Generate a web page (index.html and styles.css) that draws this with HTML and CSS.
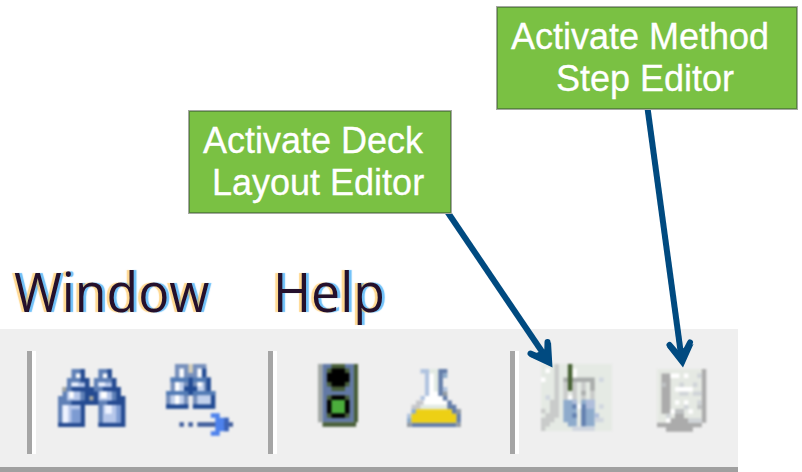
FILE: index.html
```html
<!DOCTYPE html>
<html lang="en">
<head>
<meta charset="utf-8">
<title>Editor toolbar</title>
<link rel="stylesheet" href="styles.css">
</head>
<body>
<main class="stage">
  <nav class="menubar">
    <span class="menu window">Window</span>
    <span class="menu help">Help</span>
  </nav>
  <div class="toolbar">
    <i class="sep first"></i>
    <svg class="icon find" viewBox="0 0 15 13">
      <path fill="#5f80b6" d="M3 0H6V2H7V4H8V2H9V0H12V2H13V4H14V6H15V13H9V8H6V13H0V6H1V4H2V2H3Z"/>
      <path fill="#244a91" d="M5 0h1v2h1v2h1v1h1v3H6v5H5V7h1V5H5V2H5zM11 0h1v2h1v2h1v2h1v7h-1V7h-1V5h-1V2h-1zM0 12h6v1H0zM9 12h6v1H9zM3 4h3v1H3zM10 4h3v1h-3zM3 7h3v1H3zM11 7h3v1h-3z"/>
      <path fill="#b6c7ea" d="M3 3h3v1H3zM9 3h3v1H9zM2 5h3v2H2zM9 5h3v2H9zM1 8h4v4H1zM10 8h4v4h-4z"/>
      <path fill="#fff" d="M4 1h1v1H4zM10 1h1v1h-1zM2.500 5h1v1.500h-1zM9.500 5h1.400v1.500H9.500z"/>
      <path fill="#eef3ff" d="M1 8h1.300v4H1zM3 3h1.500v.8H3zM9 3h1.500v.8H9zM10.500 8h1.500v2h-1.500z"/>
      <path fill="#7d9bd2" d="M3 9h2v3H3zM13 8h1v4h-1z"/>
      <path fill="#a8a8a0" d="M1 4h.8v1H1zM7 6h.9v1H7z"/>
    </svg>
    <svg class="icon next" viewBox="0 0 15 16">
      <path fill="#7790bc" d="M2 0h7v3h1v3h1v4H6V7H5v3H0V6h1V3h1z"/>
      <path fill="#214a93" d="M0 9h5v1H0zM6 9h5v1H6zM10 6h1v4h-1zM9 3h1v3H9zM8 1h1v2H8zM5 3h1v4H5zM4 5h3v2H4z"/>
      <path fill="#527bb5" d="M0 6h5v1H0zM6 6h5v1H6zM1 3h4v1H1zM6 3h3v1H6z"/>
      <path fill="#c2d1ec" d="M2 4h2v2H2zM7 4h1.500v2H7zM1 7h3v2H1zM7 7h3v2H7z"/>
      <path fill="#fff" d="M3 1h1v2H3zM7 1h1v2H7zM2 4h1v2H2zM2 7h1v2H2zM7 4h1v1H7z"/>
      <path fill="#d5cfbb" d="M5 0h1v2H5z"/>
      <path fill="#3f5d9c" d="M3 13h1v1H3zM5 13h1v1H5zM7 13h8v1H7z"/>
      <path fill="#4e82ec" d="M10 11h2v1h2v1h-3v-1h-1zM11 13h2v1h1v1h-2v1h-2v-1h1z"/>
      <path fill="#3c62b4" d="M13 12h1v3h-1z"/>
    </svg>
    <i class="sep second"></i>
    <svg class="icon traffic" viewBox="0 0 9 14">
      <path fill="#a2a8a5" d="M0 0h1v13H0z"/>
      <path fill="#6279a5" d="M1 0h7v13H1z"/>
      <path fill="#475d37" d="M8 0h1v13H8zM1 13h7.500v1H1zM3 0h3v6H3zM2 1h5v4H2zM2 7h5v5H2z"/>
      <path fill="#000" d="M3 1h3v1h1v2H6v1H3V4H2V2h1zM3 7h3v1h1v3H6v1H3v-1H2V8h1z"/>
      <path fill="#4bae3c" d="M3 8h3v3H3z"/>
    </svg>
    <svg class="icon flask" viewBox="0 0 12 13">
      <path fill="#b0c3df" d="M3 0h2v6h-1v1H3V6h1V1H3zM1 9h1v1H1zM0 10h1v2H0zM8 4h1v1H8z"/>
      <path fill="#fff" d="M5 1h2v5h1v1h1v1H3V7h1V6h1z"/>
      <path fill="#e2eae3" d="M5 0h2v1H5zM6 1h1v4H6zM3 8h6v1H3z"/>
      <path fill="#637da9" d="M7 0h2v1H8v5H7zM8 6h1v1H8zM9 7h1v1H9zM9 8h2v1h1v3h-1v-2h-1V9H9zM1 12h10v1H1z"/>
      <path fill="#c5c6ca" d="M2 7h1.700v1H2zM1 8h2v1H1z"/>
      <path fill="#8eaccb" d="M1 9h1v1H1zM0 11h1v1H0zM8 1h1v1H8z"/>
      <path fill="#9199a1" d="M8 5h1v1H8zM0 12h1v1H0zM11 12h1v1h-1zM11 9h1v1h-1z"/>
      <path fill="#edd015" d="M2 9h8v1h1v2H1v-2h1z"/>
    </svg>
    <i class="sep third"></i>
    <svg class="icon deck" viewBox="0 0 16 15">
      <path fill="#e5eae4" d="M0 0h16v15H0z"/>
      <path fill="#c9cbca" d="M3 0h1v12H3v1H2v1H1v1H0v-3h1v-1h1V8h1zM0 10h1v1H0zM5 4h1v4H5zM7 4h1v4H7zM9 4h1v5H9zM11 4h1v4h-1z"/>
      <path fill="#aaadac" d="M5 3h7v1H5zM9 6h1v1H9zM11 3h1v3h-1z"/>
      <path fill="#8eabcc" d="M5 8h3v6H6v-1H5zM9 8h3v6H9z"/>
      <path fill="#b0bedb" d="M10 8h2v2h-2zM7 8h1v1H7zM12 11h1v1h-1z"/>
      <path fill="#6380af" d="M9 9h1v5H9zM7 9h1v1H7zM7 11h1v1H7z"/>
      <path fill="#d0d6df" d="M13 3h1v1h-1zM13 9h1v1h-1zM1 7h1v1H1zM12 12h2v1h-2zM7 14h5v1H7z"/>
      <path fill="#fff" d="M1 1h1v1H1zM0 3h1v1H0zM7 1h1v2H7zM8 9h1v1H8zM6 7h1v1H6z"/>
      <path fill="#456031" d="M6 0h1v6H6z"/>
    </svg>
    <svg class="icon method" viewBox="0 0 11 14">
      <path fill="#e5e9e3" d="M0 0h10v12H0z"/>
      <path fill="#ababab" d="M10 0h1v12h-1v1H8v1H2v-1H0v-1h3v-1h1V9h2v2h1v1h3zM1 1h2v9H1z"/>
      <path fill="#d0d4d8" d="M9 1h1v1H9zM5 3h1v1H5zM8 3h1v1H8zM5 5h2v1H5zM8 5h2v1H8zM9 7h1v1H9zM6 8h1v1H6zM7 11h3v1H7zM2 10h1v1H2z"/>
      <path fill="#bfc2c3" d="M1 3h1v1H1zM9 8h1v1H9zM4 9h2v1H4z"/>
      <path fill="#fff" d="M3 1h2v1H3zM6 1h1v1H6zM4 4h4v1H4zM4 7h1v1H4zM6 7h1v1H6zM7 9h1v1H7zM2 11h1v1H2zM3 9h1v1H3z"/>
    </svg>
  </div>

  <svg class="arrows" viewBox="0 0 802 472">
    <path d="M447.500 212L547 359"/>
    <path class="head" d="M530.500 353.500L547 360.500L547.500 342"/>
    <path d="M647.500 108L681.500 358"/>
    <path class="head" d="M669.500 345L681.500 359L690 342.500"/>
    <path class="tip" d="M529 356.500L552.500 367.500L551 342L544 350L536 353zM667 347L683 367.500L693.500 344L684 348L678 350z"/>
  </svg>
  <div class="callout deck-note"><span>Activate Deck</span><span class="line2">Layout Editor</span></div>
  <div class="callout method-note"><span>Activate Method</span><span class="line2">Step Editor</span></div>
</main>
</body>
</html>
```
FILE: styles.css
```css
* { box-sizing: border-box; }
body { margin: 0; background: #fff; }
.stage {
  position: relative;
  width: 802px;
  height: 472px;
  padding-top: 255px;
  overflow: hidden;
}
.menubar {
  display: flex;
  height: 74px;
  padding-left: 14px;
  font: 55px/72px "Open Sans", "Noto Sans", sans-serif;
}
.menu {
  flex: none;
  color: #25102c;
  white-space: nowrap;
  transform-origin: 0 50%;
  text-shadow: -3px 0 1px rgba(255, 190, 70, .6), 3px 0 1px rgba(50, 165, 245, .7);
  filter: blur(.6px);
}
.window { width: 259px; transform: scaleX(.94); }
.help { transform: scaleX(.94); }
.toolbar {
  display: flex;
  align-items: flex-start;
  width: 738px;
  height: 143px;
  background: #efefef;
  border-bottom: 5px solid #a0a0a0;
}
.sep {
  flex: none;
  width: 9px;
  height: 103px;
  margin-top: 22px;
  border-left: 5px solid #a5a5a5;
  border-right: 4px solid #fff;
  filter: blur(.4px);
}
.first { margin-left: 27px; }
.second { margin-left: 35.500px; }
.third { margin-left: 48.800px; }
.icon { flex: none; display: block; filter: blur(.8px); }
.find { width: 67.300px; height: 58.300px; margin: 40px 0 0 22.300px; }
.next { width: 67.200px; height: 71.700px; margin: 35.300px 0 0 40.100px; }
.traffic { width: 40.400px; height: 62.800px; margin: 35.300px 0 0 40.200px; }
.flask { width: 53.800px; height: 58.300px; margin: 40px 0 0 49.200px; }
.deck { width: 71.600px; height: 67.100px; margin: 35.300px 0 0 21.900px; }
.method { width: 49.300px; height: 62.700px; margin: 40px 0 0 45.100px; }
.arrows {
  position: absolute;
  inset: 0;
  width: 802px;
  height: 472px;
  fill: none;
  stroke: #004a80;
  stroke-width: 6;
}
.head { stroke-linecap: round; stroke-linejoin: round; }
.tip { fill: #004a80; stroke: none; }
.callout {
  position: absolute;
  display: flex;
  flex-direction: column;
  border: 1px solid #a5a8a2;
  box-shadow: inset 0 0 0 1px #57893a;
  background: #7ac143;
  color: #fff;
  font: 36px/42px "Liberation Sans", Arial, sans-serif;
  -webkit-text-stroke: .3px #fff;
  white-space: nowrap;
}
.deck-note { left: 188px; top: 110px; width: 264px; height: 104px; padding: 9px 0 0 14px; }
.deck-note .line2 { padding-left: 9px; }
.method-note { left: 496px; top: 6px; width: 302px; height: 104px; padding: 9px 0 0 14px; }
.method-note .line2 { padding-left: 45px; }
```
